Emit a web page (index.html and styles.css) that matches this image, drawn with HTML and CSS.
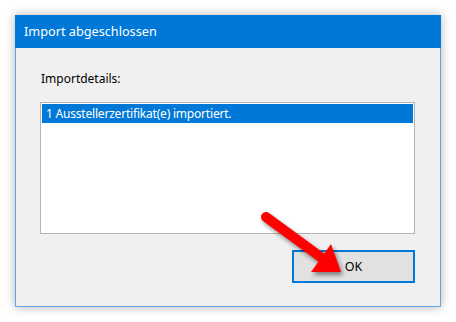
FILE: index.html
```html
<!DOCTYPE html>
<html lang="de">
<head>
    <meta charset="UTF-8">
    <title>Import abgeschlossen</title>
    <link rel="stylesheet" href="styles.css">
</head>
<body>
    <div class="window">
        <div class="titlebar">Import abgeschlossen</div>
        <div class="content">
            <div class="label">Importdetails:</div>
            <div class="listbox">
                <div class="item selected">1 Ausstellerzertifikat(e) importiert.</div>
            </div>
            <div class="buttons">
                <button class="btn default">OK</button>
            </div>
        </div>
    </div>

    <svg class="arrow" width="456" height="322" viewBox="0 0 456 322">
        <g class="arrow-shape">
            <line x1="266" y1="217" x2="322" y2="258" stroke="#f00" stroke-width="10" stroke-linecap="round"/>
            <polygon points="331,244 341,272 311,272" fill="#f00"/>
        </g>
    </svg>
</body>
</html>
```

FILE: styles.css
```css
body {
    margin: 0;
    padding: 15px;
    background-color: #fff;
    font-family: "Noto Sans", "Open Sans", sans-serif;
    font-size: 12px;
    position: relative;
    width: 426px;
    height: 292px;
}

.window {
    width: 426px;
    height: 292px;
    display: flex;
    flex-direction: column;
    box-shadow: 0 0 10px rgba(0, 0, 0, 0.3);
}

.titlebar {
    height: 33px;
    flex-shrink: 0;
    background-color: #0078d7;
    color: #fff;
    font-size: 12.7px;
    line-height: 33px;
    padding-left: 9px;
}

.content {
    flex: 1;
    background-color: #f0f0f0;
    border: 1px solid #5ea5e6;
    border-top: none;
    padding: 22px 25px 0 24px;
}

.label {
    color: #000;
    line-height: 18px;
    margin-left: 1px;
}

.listbox {
    margin-top: 14px;
    height: 128px;
    background-color: #fff;
    border: 1px solid #b4b4b4;
    padding: 1px 1px;
}

.item {
    height: 19px;
    line-height: 19px;
    padding-left: 4px;
    letter-spacing: -0.2px;
}

.item.selected {
    background-color: #0078d7;
    color: #fff;
}

.buttons {
    display: flex;
    justify-content: flex-end;
    margin-top: 16px;
}

.btn {
    width: 123px;
    height: 33px;
    background-color: #e1e1e1;
    border: 2px solid #0078d7;
    font-family: inherit;
    font-size: 12.5px;
    color: #000;
    padding: 0;
}

.arrow {
    position: absolute;
    left: 0;
    top: 0;
    pointer-events: none;
}

.arrow-shape {
    filter: drop-shadow(2px 3px 2px rgba(0, 0, 0, 0.45));
}
```
